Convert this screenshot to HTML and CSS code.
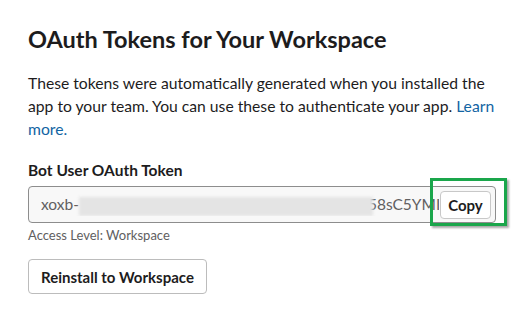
FILE: index.html
```html
<!DOCTYPE html>
<html lang="en">
<head>
    <meta charset="UTF-8">
    <meta name="viewport" content="width=device-width, initial-scale=1.0">
    <title>OAuth Tokens</title>
    <link rel="stylesheet" href="styles.css">
</head>
<body>
    <div class="page">
        <h1>OAuth Tokens for Your Workspace</h1>
        <p class="intro">These tokens were automatically generated when you installed the app to your team. You can use these to authenticate your app. <a href="#">Learn more.</a></p>

        <div class="token-block">
            <label class="token-label">Bot User OAuth Token</label>
            <div class="field-wrap">
                <div class="field">
                    <div class="token-text">xoxb-<span class="blur"></span>58sC5YMIlq</div>
                    <button class="copy-btn">Copy</button>
                </div>
                <div class="highlight"></div>
            </div>
            <div class="access">Access Level: Workspace</div>
        </div>

        <button class="reinstall-btn">Reinstall to Workspace</button>
    </div>
</body>
</html>
```

FILE: styles.css
```css
body {
    margin: 0;
    background-color: #ffffff;
    font-family: Lato, "Open Sans", sans-serif;
    color: #1d1c1d;
}
.page {
    padding: 24px 28px;
    width: 484px;
}
h1 {
    margin: 0;
    font-size: 23.5px;
    line-height: 30px;
    font-weight: 700;
}
.intro {
    margin: 18px 0 0;
    font-size: 15.7px;
    line-height: 23px;
}
.intro a {
    color: #1264a3;
    text-decoration: none;
}
.token-block {
    margin-top: 18px;
}
.token-label {
    display: block;
    font-size: 15.5px;
    line-height: 22px;
    font-weight: 700;
    margin-bottom: 5px;
}
.field-wrap {
    position: relative;
    width: 468px;
}
.field {
    display: flex;
    align-items: center;
    height: 37px;
    box-sizing: border-box;
    border: 1px solid #8d8d8d;
    border-radius: 4px;
    background-color: #f8f8f8;
    padding: 0 4px 0 12px;
}
.token-text {
    flex: 1;
    min-width: 0;
    overflow: hidden;
    white-space: nowrap;
    font-size: 15.5px;
    color: #616061;
    padding-top: 2px;
}
.blur {
    display: inline-block;
    vertical-align: middle;
    width: 294px;
    height: 19px;
    margin-right: -5px;
    position: relative;
    background-color: #e4e4e4;
    filter: blur(1.5px);
}
.copy-btn {
    flex: none;
    width: 51px;
    height: 28px;
    margin-left: 1px;
    background-color: #ffffff;
    border: 1px solid #c8c8c8;
    border-radius: 4px;
    font-family: Lato, "Open Sans", sans-serif;
    font-size: 15px;
    font-weight: 700;
    color: #1d1c1d;
    padding: 0;
    cursor: pointer;
}
.highlight {
    position: absolute;
    left: 402px;
    top: -8px;
    width: 71px;
    height: 42px;
    border: 3px solid #1aa64b;
    box-shadow: 2px 2px 2px rgba(0, 0, 0, 0.35);
}
.access {
    margin-top: 3px;
    font-size: 13px;
    line-height: 18px;
    color: #616061;
}
.reinstall-btn {
    margin-top: 15px;
    height: 35px;
    padding: 0 12px;
    background-color: #ffffff;
    border: 1px solid #bcbcbc;
    border-radius: 4px;
    font-family: Lato, "Open Sans", sans-serif;
    font-size: 15px;
    font-weight: 700;
    color: #1d1c1d;
    cursor: pointer;
}
```
